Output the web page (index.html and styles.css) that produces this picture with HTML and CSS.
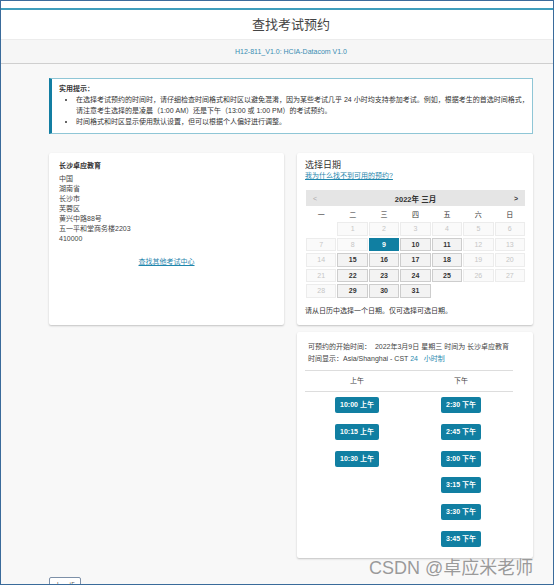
FILE: index.html
```html
<!DOCTYPE html>
<html lang="zh-CN">
<head>
<meta charset="utf-8">
<title>查找考试预约</title>
<link rel="stylesheet" href="styles.css">
</head>
<body>
<div class="frame">
  <div class="app">
    <header class="head"><div class="wrap"><h1>查找考试预约</h1></div></header>
    <div class="sub"><div class="wrap">H12-811_V1.0: HCIA-Datacom V1.0</div></div>
    <main class="main">
      <div class="wrap">
        <div class="alert">
          <div class="alert-title">实用提示：</div>
          <ul>
            <li>在选择考试预约的时间时，请仔细检查时间格式和时区以避免混淆，因为某些考试几乎 24 小时均支持参加考试。例如，根据考生的首选时间格式，<br>请注意考生选择的是凌晨（1:00 AM）还是下午（13:00 或 1:00 PM）的考试预约。</li>
            <li>时间格式和时区显示使用默认设置，但可以根据个人偏好进行调整。</li>
          </ul>
        </div>

        <div class="cols">
          <section class="card addr">
            <div class="addr-name">长沙卓应教育</div>
            <div>中国</div>
            <div>湖南省</div>
            <div>长沙市</div>
            <div>芙蓉区</div>
            <div>黄兴中路88号</div>
            <div>五一平和堂商务楼2203</div>
            <div>410000</div>
            <div class="addr-link"><a href="#">查找其他考试中心</a></div>
          </section>

          <section class="card cal">
            <h2>选择日期</h2>
            <a class="why" href="#">我为什么找不到可用的预约?</a>
            <div class="cal-head">
              <span class="prev">&lt;</span>
              <span class="month">2022年 三月</span>
              <span class="next">&gt;</span>
            </div>
            <div class="cal-week">
              <span>一</span><span>二</span><span>三</span><span>四</span><span>五</span><span>六</span><span>日</span>
            </div>
            <div class="cal-days">
              <span class="empty"></span>
              <span class="day">1</span><span class="day">2</span><span class="day">3</span><span class="day">4</span><span class="day">5</span><span class="day">6</span>
              <span class="day">7</span><span class="day">8</span><span class="day sel">9</span><span class="day on">10</span><span class="day on">11</span><span class="day">12</span><span class="day">13</span>
              <span class="day">14</span><span class="day on">15</span><span class="day on">16</span><span class="day on">17</span><span class="day on">18</span><span class="day">19</span><span class="day">20</span>
              <span class="day">21</span><span class="day on">22</span><span class="day on">23</span><span class="day on">24</span><span class="day on">25</span><span class="day">26</span><span class="day">27</span>
              <span class="day">28</span><span class="day on">29</span><span class="day on">30</span><span class="day on">31</span>
            </div>
            <p class="cal-note">请从日历中选择一个日期。仅可选择可选日期。</p>
          </section>

          <section class="card times">
            <div class="times-info">
              <div>可预约的开始时间：&nbsp; 2022年3月9日 星期三 时间为 长沙卓应教育</div>
              <div>时间显示：Asia/Shanghai - CST <a class="fmt" href="#">24 &nbsp;&nbsp;小时制</a></div>
            </div>
            <div class="slots-table">
              <div class="slots-head"><span>上午</span><span>下午</span></div>
              <div class="slots">
                <div class="slot-col">
                  <button class="slot">10:00 上午</button>
                  <button class="slot">10:15 上午</button>
                  <button class="slot">10:30 上午</button>
                </div>
                <div class="slot-col">
                  <button class="slot">2:30 下午</button>
                  <button class="slot">2:45 下午</button>
                  <button class="slot">3:00 下午</button>
                  <button class="slot">3:15 下午</button>
                  <button class="slot">3:30 下午</button>
                  <button class="slot">3:45 下午</button>
                </div>
              </div>
            </div>
          </section>
        </div>

        <button class="back">上一步</button>
      </div>
    </main>
  </div>
  <div class="watermark">CSDN @卓应米老师</div>
</div>
</body>
</html>
```

FILE: styles.css
```css
html, body {
  margin: 0;
  padding: 0;
  background: #ffffff;
}

body {
  font-family: "Liberation Sans", "Noto Sans CJK SC", Arial, sans-serif;
  color: #333333;
}

a {
  color: #1f86ad;
  text-decoration: underline;
}

.frame {
  position: relative;
  width: 554px;
  height: 585px;
  box-sizing: border-box;
  border: 1px solid #3a6b9b;
  padding-top: 7px;
  display: flex;
  flex-direction: column;
  overflow: hidden;
  background: #ffffff;
}

.app {
  flex: 1;
  display: flex;
  flex-direction: column;
  border-top: 2px solid #3f9ebd;
}

.wrap {
  margin-left: 48px;
  width: 484px;
}

.head {
  height: 29px;
  background: #ffffff;
}

.head h1 {
  margin: 0;
  font-size: 13px;
  line-height: 29px;
  font-weight: normal;
  color: #444444;
  text-align: center;
}

.sub {
  height: 23px;
  border-top: 1px solid #ececec;
  border-bottom: 1px solid #cfcfcf;
  background: #f6f6f6;
}

.sub .wrap {
  text-align: center;
  font-size: 7px;
  line-height: 23px;
  color: #3a8db2;
}

.main {
  flex: 1;
  background: #f8f8f8;
  padding-top: 14px;
}

.alert {
  box-sizing: border-box;
  border: 1px solid #8fc6d6;
  border-left: 3px solid #137ea2;
  background: #ffffff;
  padding: 4px 6px 6px 7px;
  font-size: 7px;
  line-height: 11px;
  color: #333333;
}

.alert-title {
  font-weight: bold;
}

.alert ul {
  margin: 0;
  padding-left: 17px;
}

.alert li {
  white-space: nowrap;
}

.cols {
  margin-top: 19px;
  display: grid;
  grid-template-columns: 235px 236px;
  column-gap: 13px;
  row-gap: 7px;
}

.card {
  background: #ffffff;
  border-radius: 2px;
  box-shadow: 0 1px 2px rgba(0, 0, 0, 0.22);
  box-sizing: border-box;
}

.addr {
  grid-row: 1;
  grid-column: 1;
  padding: 8px 10px;
  font-size: 7px;
  line-height: 10px;
  color: #444444;
}

.addr-name {
  font-weight: bold;
  color: #333333;
  margin-bottom: 3px;
}

.addr-link {
  text-align: center;
  margin-top: 13px;
}

.cal {
  grid-row: 1;
  grid-column: 2;
  padding: 6px 8px 9.5px 9px;
}

.cal h2 {
  margin: 0 0 0 -1px;
  font-size: 9px;
  line-height: 12px;
  font-weight: normal;
  color: #333333;
}

.why {
  display: block;
  margin-left: -1px;
  font-size: 7px;
  line-height: 10px;
}

.cal-head {
  margin-top: 9px;
  height: 16px;
  background: #e5e5e5;
  display: flex;
  align-items: center;
  justify-content: space-between;
  padding: 0 7px;
  font-size: 7px;
}

.prev {
  color: #aaaaaa;
}

.next {
  color: #333333;
  font-weight: bold;
}

.month {
  font-weight: bold;
  font-size: 7.5px;
  color: #333333;
}

.cal-week {
  display: grid;
  grid-template-columns: repeat(7, 1fr);
  column-gap: 1px;
  height: 16px;
  align-items: center;
  text-align: center;
  font-size: 7px;
  color: #333333;
}

.cal-days {
  display: grid;
  grid-template-columns: repeat(7, 1fr);
  gap: 2px 1px;
  grid-auto-rows: 13.5px;
}

.day {
  box-sizing: border-box;
  border: 1px solid #ececec;
  background: #fafafa;
  color: #c6c6c6;
  font-size: 7px;
  display: flex;
  align-items: center;
  justify-content: center;
}

.day.on {
  border-color: #cdcdcd;
  background: #f3f3f3;
  color: #333333;
  font-weight: bold;
}

.day.sel {
  background: #107fa2;
  border-color: #107fa2;
  color: #ffffff;
  font-weight: bold;
}

.cal-note {
  margin: 8px 0 0 -1px;
  font-size: 7px;
  line-height: 10px;
  color: #333333;
}

.times {
  grid-row: 2;
  grid-column: 2;
  padding: 9px 8px 11px;
}

.times-info {
  padding-left: 3px;
  font-size: 7px;
  line-height: 12px;
  color: #444444;
}

.fmt {
  text-decoration: none;
  color: #2a8bb0;
}

.slots-table {
  width: 208px;
  margin-top: 5px;
  border-top: 1px solid #dddddd;
}

.slots-head {
  display: grid;
  grid-template-columns: 1fr 1fr;
  height: 20px;
  line-height: 20px;
  text-align: center;
  font-size: 7px;
  color: #444444;
  border-bottom: 1px solid #dddddd;
}

.slots {
  display: grid;
  grid-template-columns: 1fr 1fr;
  padding-top: 5px;
  align-items: start;
}

.slot-col {
  display: flex;
  flex-direction: column;
  align-items: center;
  gap: 10.8px;
}

.slot {
  height: 16px;
  padding: 0 5px;
  margin: 0;
  background: #117fa2;
  color: #ffffff;
  font-family: inherit;
  font-weight: bold;
  font-size: 7px;
  line-height: 16px;
  border: none;
  border-radius: 2px;
}

.back {
  display: block;
  margin-top: 19px;
  width: 32px;
  height: 16px;
  padding: 0;
  border: 1px solid #7d90a8;
  border-radius: 2px;
  background: #ffffff;
  font-family: inherit;
  font-size: 7px;
  color: #555555;
}

.watermark {
  position: absolute;
  left: 368px;
  top: 556px;
  font-size: 18px;
  line-height: 22px;
  color: #9a9a9a;
  text-shadow: 0 0 1px #ffffff;
  white-space: nowrap;
}
```
